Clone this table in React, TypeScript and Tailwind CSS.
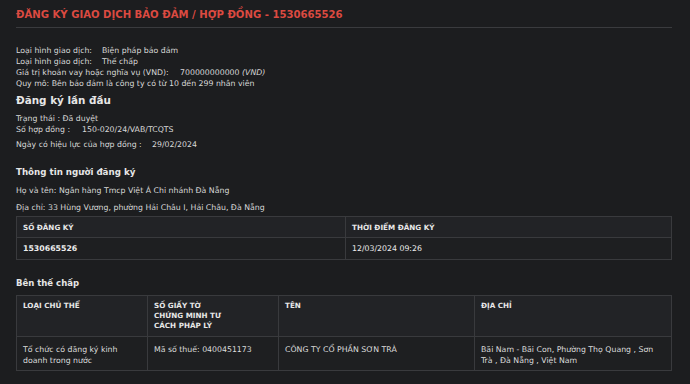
import React from "react";

const info = [
  { label: "Loại hình giao dịch:", w: "w-[86px]", value: "Biện pháp bảo đảm" },
  { label: "Loại hình giao dịch:", w: "w-[86px]", value: "Thế chấp" },
];

function Th({ children, last }: { children: React.ReactNode; last?: boolean }) {
  return (
    <div
      className={`border-b border-[#393a3d] bg-[#222326] px-[6px] text-[7.2px] font-bold uppercase text-[#e8e8e8] ${
        last ? "" : "border-r"
      }`}
    >
      {children}
    </div>
  );
}

export default function App() {
  return (
    <div className="min-h-screen bg-[#1c1d1f] pt-[8px] pl-4 pr-[18px] font-['DejaVu_Sans',sans-serif] text-[7.8px] leading-[11px] text-[#d8d8d8]">
      <h1 className="border-b border-[#3a3b3e] pb-[5px] text-[10.1px] font-bold leading-[14px] text-[#db4a41]">
        ĐĂNG KÝ GIAO DỊCH BẢO ĐẢM / HỢP ĐỒNG - 1530665526
      </h1>

      <div className="mt-[17px] whitespace-nowrap">
        {info.map((row, i) => (
          <p key={i}>
            <span className={`inline-block ${row.w}`}>{row.label}</span>
            {row.value}
          </p>
        ))}
        <p>
          <span className="inline-block w-[164px]">Giá trị khoản vay hoặc nghĩa vụ (VND):</span>
          700000000000 <i>(VND)</i>
        </p>
        <p>Quy mô: Bên bảo đảm là công ty có từ 10 đến 299 nhân viên</p>
      </div>

      <h2 className="mt-[4px] text-[10.4px] font-bold leading-[14px] text-[#e6e6e6]">Đăng ký lần đầu</h2>
      <div className="mt-[6px] whitespace-nowrap">
        <p>Trạng thái : Đã duyệt</p>
        <p>
          <span className="inline-block w-[66px]">Số hợp đồng :</span>150-020/24/VAB/TCQTS
        </p>
        <p className="mt-[4px]">
          <span className="inline-block w-[136px]">Ngày có hiệu lực của hợp đồng :</span>29/02/2024
        </p>
      </div>

      <h2 className="mt-[15px] text-[8.7px] font-bold leading-[14px] text-[#e6e6e6]">Thông tin người đăng ký</h2>
      <p className="mt-[6px]">Họ và tên: Ngân hàng Tmcp Việt Á Chi nhánh Đà Nẵng</p>
      <p className="mt-[6px]">Địa chỉ: 33 Hùng Vương, phường Hải Châu I, Hải Châu, Đà Nẵng</p>

      <div className="mt-[3px] grid grid-cols-[329px_1fr] border-t border-l border-[#393a3d]">
        <Th>
          <div className="flex h-[20px] items-center">Số đăng ký</div>
        </Th>
        <Th>
          <div className="flex h-[20px] items-center">Thời điểm đăng ký</div>
        </Th>
        <div className="flex h-[22px] items-center border-r border-b border-[#393a3d] bg-[#1e1f21] px-[6px] font-bold text-[#ececec]">
          1530665526
        </div>
        <div className="flex h-[22px] items-center border-r border-b border-[#393a3d] bg-[#1e1f21] px-[6px] text-[#ececec]">
          12/03/2024 09:26
        </div>
      </div>

      <h2 className="mt-[16px] text-[8.5px] font-bold leading-[14px] text-[#e6e6e6]">Bên thế chấp</h2>

      <div className="mt-[5px] grid grid-cols-[131px_131px_196px_1fr] border-t border-l border-[#393a3d]">
        {["Loại chủ thể", "Số giấy tờ|Chứng minh tư|cách pháp lý", "Tên", "Địa chỉ"].map((h) => (
          <div
            key={h}
            className="h-[41px] border-r border-b border-[#393a3d] bg-[#222326] px-[6px] pt-[5px] text-[7.2px] font-bold uppercase leading-[10px] text-[#e8e8e8]"
          >
            {h.split("|").map((line) => (
              <div key={line} className="whitespace-nowrap">
                {line}
              </div>
            ))}
          </div>
        ))}
        {[
          ["Tổ chức có đăng ký kinh", "doanh trong nước"],
          ["Mã số thuế: 0400451173"],
          ["CÔNG TY CỔ PHẦN SƠN TRÀ"],
          ["Bãi Nam - Bãi Con, Phường Thọ Quang , Sơn", "Trà , Đà Nẵng , Việt Nam"],
        ].map((lines, i) => (
          <div
            key={i}
            className="h-[34px] border-r border-b border-[#393a3d] bg-[#1e1f21] px-[6px] pt-[7px] leading-[11px] text-[#dcdcdc]"
          >
            {lines.map((line) => (
              <div key={line} className="whitespace-nowrap">
                {line}
              </div>
            ))}
          </div>
        ))}
      </div>
    </div>
  );
}
